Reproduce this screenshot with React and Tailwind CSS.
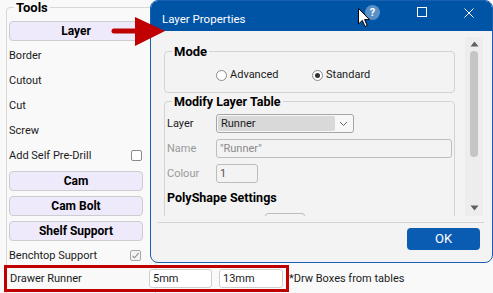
import React from "react";

function ToolButton({ children }) {
  return (
    <div className="h-[25px] flex items-center">
      <div className="w-full h-[20px] rounded-[4px] border border-[#cdcdcd] bg-[#eeeafc] font-bold text-[12px] text-black flex items-center justify-center">
        {children}
      </div>
    </div>
  );
}

function TextRow({ children, check }) {
  return (
    <div className="h-[25px] flex items-center justify-between">
      <span>{children}</span>
      {check === "empty" && (
        <span className="mr-[1px] w-[11px] h-[11px] rounded-[2px] border border-[#8a8a8a] bg-white" />
      )}
      {check === "checked" && (
        <span className="mr-[2px] w-[11px] h-[11px] rounded-[2px] border border-[#a8a8a8] bg-[#f4f4f4] flex items-center justify-center">
          <svg width="9" height="9" viewBox="0 0 9 9">
            <path d="M1.5 4.8 L3.6 6.8 L7.6 2.2" fill="none" stroke="#8a8a8a" strokeWidth="1.1" />
          </svg>
        </span>
      )}
    </div>
  );
}

function Radio({ checked }) {
  return (
    <span className="w-[11px] h-[11px] rounded-full border border-[#8a8a8a] bg-white flex items-center justify-center">
      {checked && <span className="w-[5px] h-[5px] rounded-full bg-[#333]" />}
    </span>
  );
}

export default function App() {
  return (
    <div className="relative w-[493px] h-[293px] overflow-hidden bg-[#f9f9f9] text-[11px] leading-[14px] text-[#1b1b1b] font-['Roboto','Liberation_Sans',sans-serif]">
      {/* Tools group */}
      <div className="relative ml-[6px] mt-[7px] w-[150px] h-[300px] border border-[#d8d8d8] rounded-[4px] pt-[10px] pl-[2px]">
        <span className="absolute -top-[8px] left-[7px] px-[2px] bg-[#f9f9f9] font-bold text-[13px] leading-[15px] text-black">
          Tools
        </span>
        <div className="flex flex-col w-[134px]">
          <ToolButton>Layer</ToolButton>
          <TextRow>Border</TextRow>
          <TextRow>Cutout</TextRow>
          <TextRow>Cut</TextRow>
          <TextRow>Screw</TextRow>
          <TextRow check="empty">Add Self Pre-Drill</TextRow>
          <ToolButton>Cam</ToolButton>
          <ToolButton>Cam Bolt</ToolButton>
          <ToolButton>Shelf Support</ToolButton>
          <TextRow check="checked">Benchtop Support</TextRow>
          <div className="h-[21px] flex items-center w-[420px] whitespace-nowrap">
            <span className="w-[140px] shrink-0 pl-[1px]">Drawer Runner</span>
            <div className="shrink-0 w-[63px] h-[19px] rounded-[3px] border border-[#cfcfcf] bg-white flex items-center pl-[3px]">5mm</div>
            <div className="shrink-0 ml-[7px] w-[64px] h-[19px] rounded-[3px] border border-[#cfcfcf] bg-white flex items-center pl-[3px]">13mm</div>
            <span className="shrink-0 ml-[6px]">*Drw Boxes from tables</span>
          </div>
        </div>
      </div>

      {/* red annotation box */}
      <div className="absolute left-[4px] top-[265px] w-[285px] h-[27px] border-[3px] border-[#c00000]" />

      {/* Dialog window */}
      <div className="absolute left-[150px] top-0 w-[343px] h-[263px] rounded-[8px] border border-[#1a5eb0] bg-[#f3f3f3] overflow-hidden flex flex-col">
        <div className="h-[30px] shrink-0 bg-[#0054a6] flex items-start text-white">
          <span className="ml-[11px] mt-[11px] text-[11.5px] leading-[15px]">Layer Properties</span>
          <div className="flex-1" />
          <span className="mt-[4px] w-[15px] h-[15px] rounded-full bg-white/35 flex items-center justify-center text-[11px] leading-[11px] font-bold">
            ?
          </span>
          <span className="ml-[37px] mt-[6px] w-[10px] h-[10px] border border-white" />
          <svg className="ml-[37px] mt-[7px] mr-[18px]" width="10" height="10" viewBox="0 0 10 10">
            <path d="M0.5 0.5 L9.5 9.5 M9.5 0.5 L0.5 9.5" stroke="white" strokeWidth="1" />
          </svg>
        </div>

        <div className="flex-1 flex flex-col pt-[6px]">
          <div className="flex h-[179px] pl-[7px] pr-[9px]">
            {/* viewport */}
            <div className="flex-1 overflow-hidden">
              {/* Mode group */}
              <div className="relative mt-[14px] ml-[6px] w-[291px] h-[42px] border border-[#d3d3d3] rounded-[4px] pt-[16px]">
                <span className="absolute -top-[8px] left-[7px] px-[2px] bg-[#f3f3f3] font-bold text-[13px] leading-[15px] text-black">
                  Mode
                </span>
                <div className="flex items-center pl-[51px]">
                  <div className="w-[96px] flex items-center gap-[3px]">
                    <Radio />
                    <span>Advanced</span>
                  </div>
                  <div className="flex items-center gap-[3px]">
                    <Radio checked />
                    <span>Standard</span>
                  </div>
                </div>
              </div>

              {/* Modify Layer Table group */}
              <div className="relative mt-[8px] ml-[6px] w-[291px] h-[200px] border border-[#d3d3d3] rounded-[4px] pt-[12px] pl-[2px]">
                <span className="absolute -top-[8px] left-[7px] px-[2px] bg-[#f3f3f3] font-bold text-[12.5px] leading-[15px] text-black">
                  Modify Layer Table
                </span>
                <div className="flex items-center h-[19px]">
                  <span className="w-[49px]">Layer</span>
                  <div className="w-[138px] h-[19px] rounded-[3px] border border-[#a5a5a5] bg-[#f7f7f7] flex p-[1px]">
                    <div className="w-[117px] h-full rounded-[2px] bg-[#d9d9d9] flex items-center pl-[3px]">Runner</div>
                    <div className="flex-1 flex items-center justify-center">
                      <svg width="9" height="6" viewBox="0 0 9 6">
                        <path d="M1 1 L4.5 4.5 L8 1" fill="none" stroke="#666" strokeWidth="1" />
                      </svg>
                    </div>
                  </div>
                </div>
                <div className="flex items-center h-[19px] mt-[6px] text-[#9a9a9a]">
                  <span className="w-[49px]">Name</span>
                  <div className="w-[236px] h-[19px] rounded-[3px] border border-[#bdbdbd] flex items-center pl-[3px] text-[#8a8a8a]">
                    "Runner"
                  </div>
                </div>
                <div className="flex items-center h-[19px] mt-[6px] text-[#9a9a9a]">
                  <span className="w-[49px]">Colour</span>
                  <div className="w-[42px] h-[19px] rounded-[3px] border border-[#bdbdbd] flex items-center pl-[3px] text-[#555]">
                    1
                  </div>
                </div>
                <div className="flex items-center h-[19px] mt-[5px] font-bold text-[12.5px] text-black">
                  PolyShape Settings
                </div>
                <div className="mt-[6px] ml-[98px] w-[40px] h-[19px] rounded-[3px] border border-[#bdbdbd]" />
              </div>
            </div>
            {/* scrollbar */}
            <div className="ml-[1px] w-[18px] bg-[#ededed] flex flex-col items-center">
              <svg className="mt-[4px]" width="9" height="6" viewBox="0 0 9 6">
                <path d="M0.5 5.5 L4.5 0.5 L8.5 5.5 Z" fill="#606060" />
              </svg>
              <div className="mt-[4px] w-[8px] h-[106px] rounded-full bg-[#c5c5c5]" />
              <div className="flex-1" />
              <svg className="mb-[5px]" width="9" height="6" viewBox="0 0 9 6">
                <path d="M0.5 0.5 L4.5 5.5 L8.5 0.5 Z" fill="#606060" />
              </svg>
            </div>
          </div>
          <div className="mt-[6px] ml-[7px] mr-[8px] h-px bg-[#d4d4d4]" />
          <div className="flex justify-end mt-[5px] mr-[12px]">
            <div className="w-[73px] h-[22px] rounded-[4px] bg-[#0a5cb2] text-white text-[13px] flex items-center justify-center">
              OK
            </div>
          </div>
        </div>
      </div>

      {/* red arrow */}
      <svg className="absolute left-[110px] top-[15px]" width="58" height="34" viewBox="0 0 58 34">
        <path d="M4 13.5 L28 13.5 L28 18.5 L4 18.5 A2.5 2.5 0 0 1 4 13.5 Z" fill="#c00000" />
        <path d="M25 2 L55 16 L25 31 Z" fill="#c00000" />
      </svg>

      {/* mouse cursor */}
      <svg className="absolute left-[358px] top-[8px]" width="13" height="20" viewBox="0 0 13 20">
        <path d="M0.5 0.5 L0.5 16 L4.3 12.4 L7 18.5 L9.2 17.5 L6.6 11.6 L11.5 11.6 Z" fill="white" stroke="black" strokeWidth="1" strokeLinejoin="round" />
      </svg>
    </div>
  );
}
